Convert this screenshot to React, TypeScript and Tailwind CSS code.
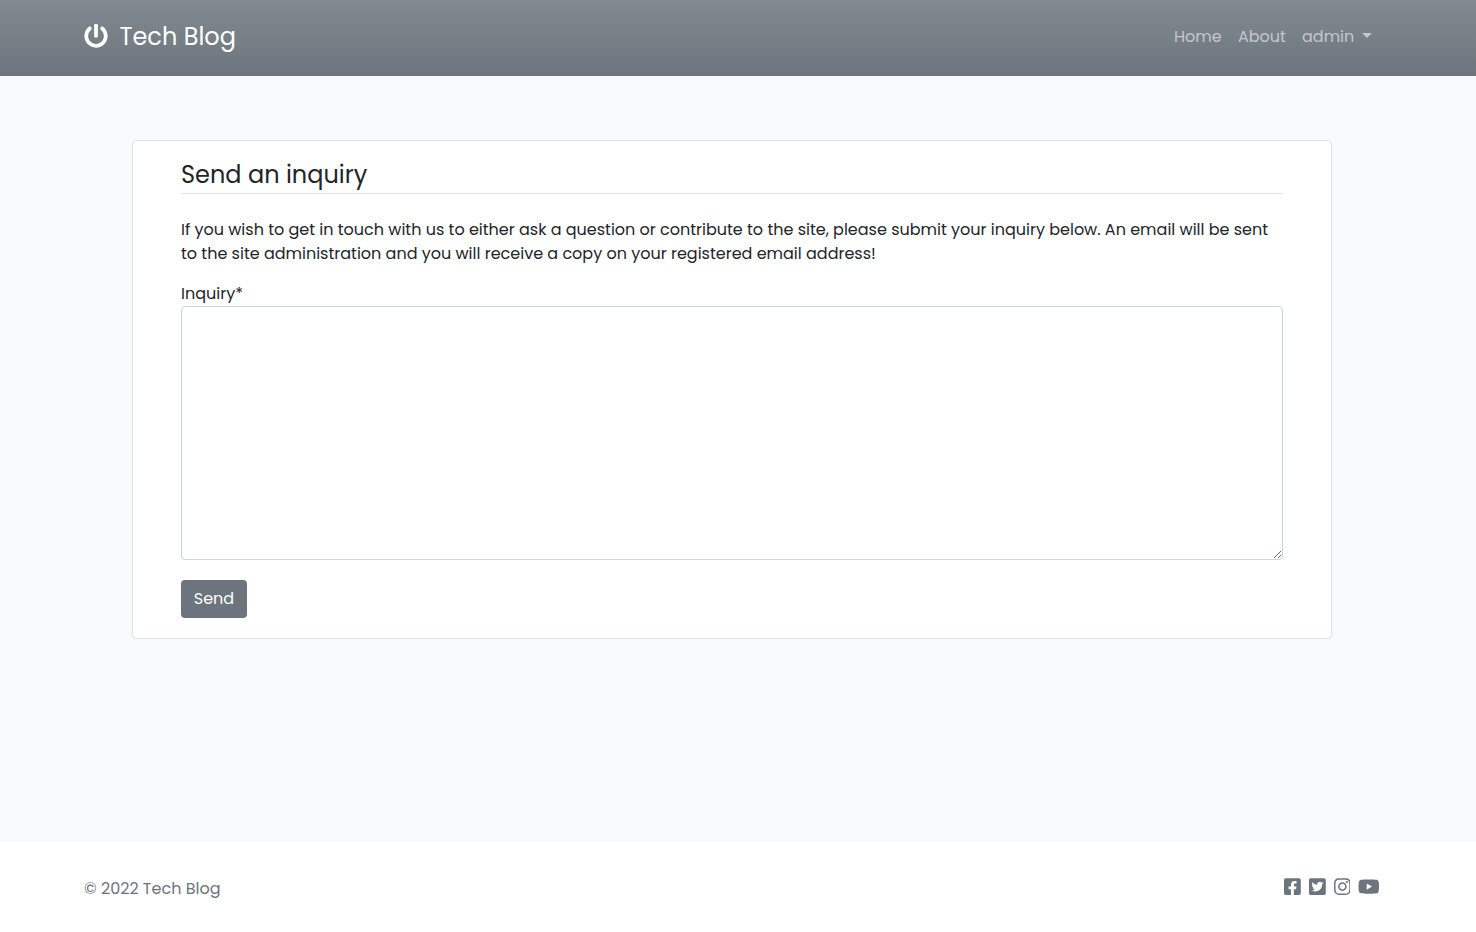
import { FaFacebookSquare, FaInstagram, FaPowerOff, FaTwitterSquare, FaYoutube } from "react-icons/fa";

function Header() {
  return (
    <header className="flex h-19 items-start justify-between bg-linear-to-b from-[#828a91] to-[#6c757d] pr-26 pl-21">
      <a href="#" className="flex h-[72px] items-center gap-[11.5px] text-[24px] text-white">
        <FaPowerOff className="size-6" />
        <span className="pt-0.5 whitespace-nowrap">Tech Blog</span>
      </a>
      <nav className="flex h-[74px] items-center gap-4 text-[16px] text-[#c4c8cb]">
        <a href="#" className="w-12 whitespace-nowrap">Home</a>
        <a href="#" className="w-12 whitespace-nowrap">About</a>
        <a href="#" className="flex w-[70px] items-center justify-between whitespace-nowrap">
          admin
          <span className="mb-1 border-x-[5px] border-t-[5px] border-x-transparent border-t-[#c4c8cb]" />
        </a>
      </nav>
    </header>
  );
}

function InquiryForm() {
  return (
    <form className="h-[499px] w-[1200px] rounded border border-[#dee2e6] bg-white px-12 pt-4">
      <h1 className="h-[37px] border-b border-[#dee2e6] text-[24px] leading-9 whitespace-nowrap">Send an inquiry</h1>
      <p className="mt-6 text-[16px] leading-6 whitespace-nowrap">
        <span>If you wish to get in touch with us to either ask a question or contribute to the site, please submit your inquiry below. An email will be sent</span>
        <br />
        <span>to the site administration and you will receive a copy on your registered email address!</span>
      </p>
      <label htmlFor="inquiry" className="mt-4 block text-[16px] leading-6">Inquiry*</label>
      <textarea id="inquiry" className="block h-[254px] w-full resize-y rounded border border-[#ced4da] bg-white px-3 py-1.5 outline-none" />
      <button type="button" className="mt-5 h-[38px] w-[66px] rounded bg-[#6c757d] text-[16px] text-white">Send</button>
    </form>
  );
}

function Footer() {
  return (
    <footer className="flex h-[90px] items-center justify-between bg-white pr-24 pl-21 text-[#6c757d]">
      <span className="pt-1 text-[16px] whitespace-nowrap">© 2022 Tech Blog</span>
      <div className="flex items-center gap-2">
        <FaFacebookSquare className="h-[19.2px] w-[16.8px]" />
        <FaTwitterSquare className="h-[19.2px] w-[16.8px]" />
        <FaInstagram className="h-[19.2px] w-[16.8px]" />
        <FaYoutube className="h-[19.2px] w-[21.6px]" />
      </div>
    </footer>
  );
}

export default function App() {
  return (
    <div className="flex h-[932px] w-full flex-col overflow-hidden bg-[#f8f9fb] font-['Poppins','Inter',sans-serif] font-normal text-[#212529]">
      <Header />
      <main className="flex-1 pt-16 pl-33">
        <InquiryForm />
      </main>
      <Footer />
    </div>
  );
}
